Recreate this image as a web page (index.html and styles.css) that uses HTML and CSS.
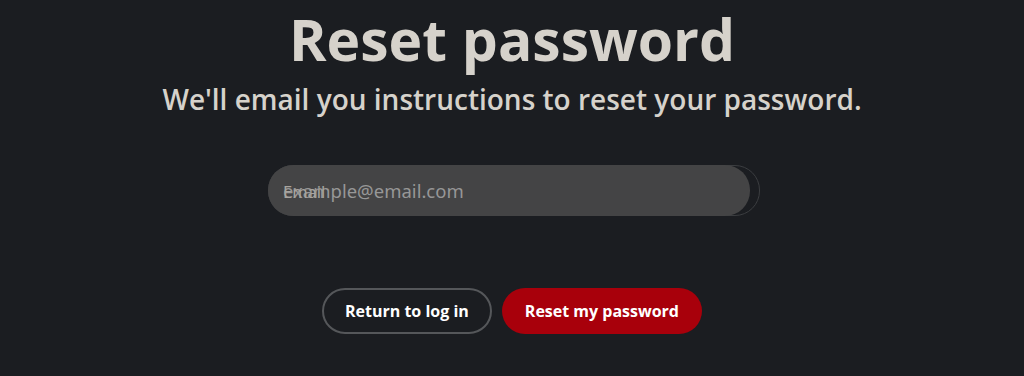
FILE: index.html
```html
<!DOCTYPE html>
<html lang="en">
  <head>
    <meta charset="UTF-8" />
    <meta name="viewport" content="width=device-width, initial-scale=1.0" />
    <title>Reset password</title>
    <link rel="stylesheet" href="styles.css">
  </head>
  <body>
    <div class="reset">
      <h1 class="title">Reset password</h1>
      <p class="subtitle">We'll email you instructions to reset your password.</p>
      <form class="reset_form">
        <div class="field">
          <label class="field_label" for="email">Email</label>
          <input class="field_input" id="email" type="email" placeholder="example@email.com" />
        </div>
        <div class="actions">
          <button type="button" class="btn btn_outline">Return to log in</button>
          <button type="submit" class="btn btn_primary">Reset my password</button>
        </div>
      </form>
    </div>
  </body>
</html>
```

FILE: styles.css
```css
* {
  margin: 0;
  padding: 0;
  box-sizing: border-box;
}

body {
  background-color: #1b1d21;
  font-family: "Open Sans", "DejaVu Sans", sans-serif;
}

.reset {
  display: flex;
  flex-direction: column;
  align-items: center;
  padding-top: 4px;
}

.title {
  font-size: 57px;
  font-weight: 700;
  line-height: 70px;
  color: #d6d2cb;
}

.subtitle {
  margin-top: 8px;
  font-size: 28px;
  font-weight: 600;
  line-height: 35px;
  color: #d6d2cb;
}

.reset_form {
  display: flex;
  flex-direction: column;
  align-items: center;
  margin-top: 48px;
}

.field {
  position: relative;
  width: 492px;
  height: 51px;
  margin-left: 4px;
  border: 1px solid #3b3d40;
  border-radius: 25px;
}

.field_input {
  width: 482px;
  height: 51px;
  margin: -1px 0 0 -1px;
  padding: 0 15px;
  border: none;
  border-radius: 25px;
  background-color: #444445;
  font-family: "Noto Sans", sans-serif;
  font-size: 18.5px;
  color: #ddd;
  outline: none;
}

.field_input::placeholder {
  color: #979797;
}

.field_label {
  position: absolute;
  left: 14px;
  top: 14px;
  font-family: "Noto Sans", sans-serif;
  font-size: 16.5px;
  color: #a8a49e;
  pointer-events: none;
}

.actions {
  display: flex;
  gap: 10px;
  margin-top: 72px;
}

.btn {
  height: 46px;
  padding: 0 21px;
  border-radius: 23px;
  font-family: "Open Sans", "Liberation Sans", sans-serif;
  font-size: 16px;
  font-weight: 700;
  color: #fff;
  cursor: pointer;
}

.btn_outline {
  border: 2px solid #55575a;
  background-color: transparent;
}

.btn_primary {
  padding: 0 23px;
  border: none;
  background-color: #a8000b;
}
```
